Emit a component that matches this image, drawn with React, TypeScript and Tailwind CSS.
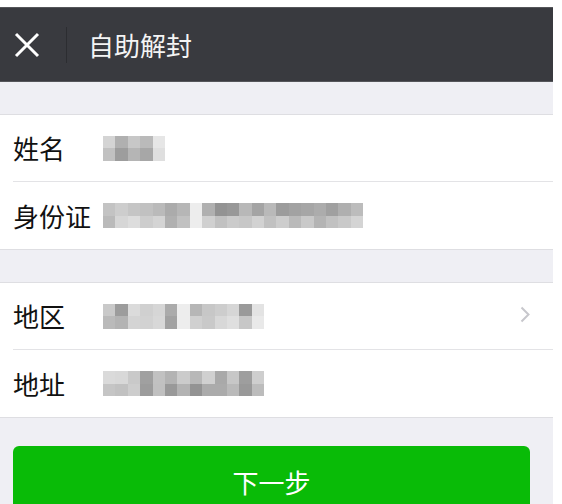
const nameMosaic = [
    ["#e4e4e4", "#bdbdbd", "#d6d6d6", "#c8c8c8", "#f7f7f7"],
    ["#d0d0d0", "#a9a9a9", "#c3c3c3", "#b4b4b4", "#f0f0f0"],
];

const idMosaic = [
    ["#d2d2d2", "#dcdcdc", "#d4d4d4", "#cfcfcf", "#c8c8c8", "#b8b8b8", "#c4c4c4", "#ffffff", "#bdbdbd", "#9e9e9e", "#a3a3a3", "#c6c6c6", "#b0b0b0", "#c7c7c7", "#a8a8a8", "#aeaeae", "#b2b2b2", "#b9b9b9", "#acacac", "#bcbcbc", "#cacaca"],
    ["#c8c8c8", "#e6e6e6", "#eeeeee", "#dcdcdc", "#e4e4e4", "#bdbdbd", "#d0d0d0", "#ffffff", "#e0e0e0", "#cfcfcf", "#dadada", "#d6d6d6", "#e2e2e2", "#d0d0d0", "#dcdcdc", "#c8c8c8", "#d8d8d8", "#c2c2c2", "#d0d0d0", "#d8d8d8", "#e4e4e4"],
];

const regionMosaic = [
    ["#d8d8d8", "#a8a8a8", "#ececec", "#e0e0e0", "#e6e6e6", "#b8b8b8", "#ffffff", "#c4c4c4", "#d6d6d6", "#dcdcdc", "#e6e6e6", "#a6a6a6", "#f4f4f4"],
    ["#c8c8c8", "#c0c0c0", "#e4e4e4", "#e2e2e2", "#e8e8e8", "#aeaeae", "#ffffff", "#e0e0e0", "#d8d8d8", "#e8e8e8", "#f0f0f0", "#d6d6d6", "#fafafa"],
];

const addressMosaic = [
    ["#eaeaea", "#e8e8e8", "#d8d8d8", "#acacac", "#d0d0d0", "#c0c0c0", "#dadada", "#c6c6c6", "#e0e0e0", "#b6b6b6", "#d6d6d6", "#aaaaaa", "#dedede"],
    ["#d4d4d4", "#d0d0d0", "#dcdcdc", "#a8a8a8", "#cecece", "#a4a4a4", "#c0c0c0", "#9e9e9e", "#b8b8b8", "#b8b8b8", "#c8c8c8", "#a4a4a4", "#cacaca"],
];

const Mosaic: React.FC<{ rows: string[][] }> = ({ rows }) => {
    return <div className="flex flex-col blur-[0.6px] brightness-[0.93]">
        {rows.map((row, i) => (
            <div key={i} className="flex">
                {row.map((c, j) => (
                    <span key={j} className="w-[12.4px] h-[12.5px]" style={{ backgroundColor: c }} />
                ))}
            </div>
        ))}
    </div>
}

const Row: React.FC<{ label: string; mosaic: string[][]; arrow?: boolean; last?: boolean }> = ({ label, mosaic, arrow, last }) => {
    return <div className="pl-[13px]">
        <div className={"flex items-center h-[67px] " + (last ? "" : "border-b border-[#e3e3e6]")}>
            <span className="w-[90px] text-[26px] leading-none text-[#111]">{label}</span>
            <Mosaic rows={mosaic} />
            {arrow && (
                <svg className="ml-auto mr-[23px] -mt-[3px]" width="10" height="17" viewBox="0 0 10 17" fill="none">
                    <polyline points="1.5,1.5 8.5,8.5 1.5,15.5" stroke="#c7c7cc" strokeWidth="2" />
                </svg>
            )}
        </div>
    </div>
}

export default function App() {
    return <div className="w-[562px] h-[504px] bg-white overflow-hidden pt-[7px]" style={{ fontFamily: '"Noto Sans CJK SC", "Noto Sans", sans-serif' }}>
        <div className="w-[553px] h-[497px] bg-[#efeff4] flex flex-col">
            <header className="h-[75px] bg-[#393a3f] border-t border-b border-[#55565a] flex items-center pl-[14px] shrink-0">
                <svg width="26" height="26" viewBox="0 0 26 26" fill="none">
                    <path d="M2 2 L24 24 M24 2 L2 24" stroke="#ffffff" strokeWidth="3" />
                </svg>
                <span className="ml-[26px] w-px h-[36px] bg-[#2c2d31]" />
                <h1 className="ml-[21px] text-[26px] leading-none text-[#f4f4f4] font-normal">自助解封</h1>
            </header>

            <section className="mt-[32px] bg-white border-t border-b border-[#dedee2]">
                <Row label="姓名" mosaic={nameMosaic} />
                <Row label="身份证" mosaic={idMosaic} last />
            </section>

            <section className="mt-[32px] bg-white border-t border-b border-[#dedee2]">
                <Row label="地区" mosaic={regionMosaic} arrow />
                <Row label="地址" mosaic={addressMosaic} last />
            </section>

            <button className="mt-[28px] ml-[13px] w-[517px] h-[72px] shrink-0 rounded-[6px] bg-[#09bb07] text-white text-[26px] leading-none">
                下一步
            </button>
        </div>
    </div>
}
